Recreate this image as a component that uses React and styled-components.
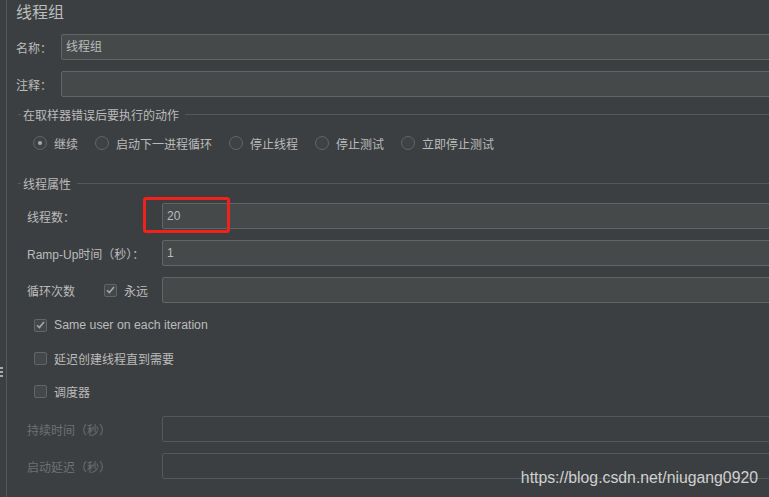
import React from "react";
import styled, { createGlobalStyle } from "styled-components";

const GlobalStyle = createGlobalStyle`
  html, body {
    margin: 0;
    padding: 0;
    background: #3c3f41;
  }
  body {
    font-family: "Liberation Sans", "Noto Sans CJK SC", sans-serif;
    color: #bbbbbb;
  }
`;

const Page = styled.div`
  position: relative;
  width: 769px;
  height: 497px;
  overflow: hidden;
  display: flex;
  background: #3c3f41;
`;

const Gutter = styled.div`
  width: 7px;
  flex: none;
  border-right: 1px solid #555759;
  display: flex;
  flex-direction: column;
  gap: 2px;
  padding-top: 367px;
  box-sizing: border-box;
`;

const Dot = styled.span`
  display: block;
  width: 3px;
  height: 2px;
  background: #a8a8a8;
`;

const Main = styled.div`
  flex: 1;
  padding: 3px 0 0 9px;
  margin-right: -20px;
  display: flex;
  flex-direction: column;
`;

const Title = styled.div`
  font-size: 16px;
  line-height: 20px;
  height: 20px;
  color: #bbbbbb;
`;

const FieldRow = styled.div`
  display: flex;
  align-items: center;
  margin-top: ${(p) => p.$top || 11}px;
`;

const Label = styled.label`
  font-size: 12px;
  width: ${(p) => p.$w || 45}px;
  flex: none;
  color: ${(p) => (p.$disabled ? "#6e7072" : "#bbbbbb")};
  display: flex;
  align-items: center;
`;

const Input = styled.div`
  position: relative;
  flex: 1;
  height: 26px;
  box-sizing: border-box;
  background: ${(p) => (p.$disabled ? "#3c3f41" : "#45494a")};
  border: 1px solid ${(p) => (p.$disabled ? "#555759" : "#646464")};
  border-radius: 2px;
  padding-left: 4px;
  font-size: 12px;
  line-height: 24px;
  color: #bbbbbb;
`;

const Legend = styled.div`
  display: flex;
  align-items: center;
  gap: 2px;
  margin-left: 2px;
  font-size: 12px;
  color: #bbbbbb;
  height: 16px;
  margin-top: ${(p) => p.$top}px;
  &::before {
    content: "";
    width: 3px;
    border-top: 1px solid #555759;
  }
  &::after {
    content: "";
    flex: 1;
    margin-left: 4px;
    border-top: 1px solid #555759;
  }
`;

const RadioRow = styled.div`
  display: flex;
  align-items: center;
  margin: 13px 0 0 17px;
  height: 16px;
`;

const RadioItem = styled.label`
  display: flex;
  align-items: center;
  gap: 7px;
  font-size: 12px;
  margin-right: 17px;
`;

const RadioCircle = styled.span`
  width: 14px;
  height: 14px;
  box-sizing: border-box;
  border-radius: 50%;
  border: 1px solid #646464;
  background: #3f4244;
  display: flex;
  align-items: center;
  justify-content: center;
  &::after {
    content: "";
    width: 4px;
    height: 4px;
    border-radius: 50%;
    background: ${(p) => (p.$on ? "#a9a9a9" : "transparent")};
  }
`;

const Props = styled.div`
  display: flex;
  flex-direction: column;
  padding-left: 11px;
`;

const Box = styled.span`
  width: 13px;
  height: 13px;
  flex: none;
  box-sizing: border-box;
  border: 1px solid #646464;
  border-radius: 2px;
  background: #43494a;
  display: flex;
  align-items: center;
  justify-content: center;
`;

const CheckRow = styled.label`
  display: flex;
  align-items: center;
  gap: 7px;
  font-size: 12px;
  height: 16px;
  margin: ${(p) => p.$top}px 0 0 18px;
`;

const CheckText = styled.span`
  font-size: 12.3px;
`;

const InlineCheck = styled.span`
  display: flex;
  align-items: center;
  gap: 7px;
  margin-left: auto;
  margin-right: 14px;
`;

const RedMark = styled.div`
  position: absolute;
  left: -20px;
  top: -7px;
  width: 87px;
  height: 36px;
  box-sizing: border-box;
  border: 3px solid #f0231a;
  border-radius: 3px;
`;

const Watermark = styled.div`
  position: absolute;
  right: 11px;
  bottom: 10px;
  font-family: "Liberation Sans", Arial, sans-serif;
  font-size: 15.8px;
  color: rgba(235, 235, 235, 0.85);
`;

const Tick = () => (
  <svg width="9" height="8" viewBox="0 0 9 8">
    <path d="M1 4.2 L3.4 6.6 L8 1" fill="none" stroke="#a7a7a7" strokeWidth="1.6" />
  </svg>
);

const Check = ({ on }) => <Box>{on && <Tick />}</Box>;

const radios = [
  { text: "继续", on: true },
  { text: "启动下一进程循环" },
  { text: "停止线程" },
  { text: "停止测试" },
  { text: "立即停止测试" },
];

export default function App() {
  return (
    <>
      <GlobalStyle />
      <Page>
        <Gutter>
          <Dot />
          <Dot />
          <Dot />
        </Gutter>
        <Main>
          <Title>线程组</Title>
          <FieldRow $top={11}>
            <Label>名称：</Label>
            <Input>线程组</Input>
          </FieldRow>
          <FieldRow>
            <Label>注释：</Label>
            <Input />
          </FieldRow>

          <Legend $top={9}>在取样器错误后要执行的动作</Legend>
          <RadioRow>
            {radios.map((r) => (
              <RadioItem key={r.text}>
                <RadioCircle $on={r.on} />
                {r.text}
              </RadioItem>
            ))}
          </RadioRow>

          <Legend $top={24}>线程属性</Legend>
          <Props>
            <FieldRow $top={12}>
              <Label $w={135}>线程数：</Label>
              <Input>
                20
                <RedMark />
              </Input>
            </FieldRow>
            <FieldRow>
              <Label $w={135}>Ramp-Up时间（秒）：</Label>
              <Input>1</Input>
            </FieldRow>
            <FieldRow>
              <Label $w={135}>
                循环次数
                <InlineCheck>
                  <Check on />
                  永远
                </InlineCheck>
              </Label>
              <Input />
            </FieldRow>
          </Props>

          <CheckRow $top={14}>
            <Check on />
            <CheckText>Same user on each iteration</CheckText>
          </CheckRow>
          <CheckRow $top={17}>
            <Check />
            延迟创建线程直到需要
          </CheckRow>
          <CheckRow $top={17}>
            <Check />
            调度器
          </CheckRow>

          <Props>
            <FieldRow $top={17}>
              <Label $w={135} $disabled>持续时间（秒）</Label>
              <Input $disabled />
            </FieldRow>
            <FieldRow>
              <Label $w={135} $disabled>启动延迟（秒）</Label>
              <Input $disabled />
            </FieldRow>
          </Props>
        </Main>
        <Watermark>https://blog.csdn.net/niugang0920</Watermark>
      </Page>
    </>
  );
}
